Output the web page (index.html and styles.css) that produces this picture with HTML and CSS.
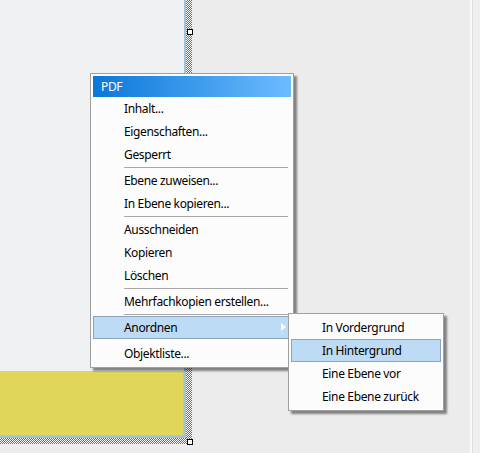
FILE: index.html
```html
<!DOCTYPE html>
<html lang="de">
<head>
  <meta charset="UTF-8">
  <title>Objekt-Kontextmenü</title>
  <link rel="stylesheet" href="styles.css">
</head>
<body>
  <div class="workspace">
    <div class="canvas">
      <div class="selection">
        <div class="page">
          <div class="note"></div>
        </div>
        <span class="handle handle-top"></span>
        <span class="handle handle-bottom"></span>
      </div>
    </div>
    <div class="edge"></div>
  </div>

  <ul class="menu main-menu">
    <li class="menu-title">PDF</li>
    <li class="item">Inhalt...</li>
    <li class="item">Eigenschaften...</li>
    <li class="item">Gesperrt</li>
    <li class="sep"></li>
    <li class="item">Ebene zuweisen...</li>
    <li class="item">In Ebene kopieren...</li>
    <li class="sep"></li>
    <li class="item">Ausschneiden</li>
    <li class="item">Kopieren</li>
    <li class="item">Löschen</li>
    <li class="sep"></li>
    <li class="item">Mehrfachkopien erstellen...</li>
    <li class="sep"></li>
    <li class="item active has-sub">Anordnen</li>
    <li class="sep blank"></li>
    <li class="item">Objektliste...</li>
  </ul>

  <ul class="menu sub-menu">
    <li class="item">In Vordergrund</li>
    <li class="item active">In Hintergrund</li>
    <li class="item">Eine Ebene vor</li>
    <li class="item">Eine Ebene zurück</li>
  </ul>
</body>
</html>
```

FILE: styles.css
```css
body {
  margin: 0;
  font-family: "Noto Sans", sans-serif;
  font-size: 12px;
  letter-spacing: -0.35px;
  color: #000;
  background: #ececec;
  position: relative;
  width: 480px;
  height: 453px;
  overflow: hidden;
}

/* drawing area */
.workspace {
  display: flex;
  height: 453px;
}

.canvas {
  flex: 1;
}

.edge {
  width: 8px;
  background: #efefef;
  border-left: 2px solid #f9f9f9;
  box-shadow: inset 1px 0 0 #dedede;
}

/* selected page with hatched frame */
.selection {
  position: relative;
  width: 186px;
  padding: 0 6px 6px 0;
  background-color: #fff;
  background-image: conic-gradient(#6e6e6e 25%, #fff 0 50%, #6e6e6e 0 75%, #fff 0);
  background-size: 2px 2px;
}

.page {
  height: 436px;
  display: flex;
  flex-direction: column;
  background: #eef0f2;
  border-right: 2px solid #9cc2e6;
  border-bottom: 2px solid #9cc2e6;
  box-sizing: content-box;
}

.note {
  margin-top: auto;
  height: 64px;
  background: #e0d75a;
  border-right: 1px solid #b8cf86;
  border-bottom: 1px solid #b8cf86;
}

.handle {
  position: absolute;
  left: 187px;
  width: 4px;
  height: 4px;
  background: #fff;
  border: 1px solid #000;
}

.handle-top { top: 29px; }
.handle-bottom { top: 439px; }

/* context menus */
.menu {
  position: absolute;
  margin: 0;
  padding: 2px;
  list-style: none;
  background: #fcfcfc;
  border: 1px solid #a0a0a0;
  box-shadow: 3px 3px 2px rgba(0, 0, 0, 0.45);
}

.main-menu {
  left: 90px;
  top: 73px;
  width: 198px;
}

.sub-menu {
  left: 288px;
  top: 313px;
  width: 150px;
}

.menu-title {
  height: 21px;
  line-height: 21px;
  padding-left: 8px;
  color: #fff;
  background: linear-gradient(to right, #0b77d8, #6cbcff);
}

.item {
  position: relative;
  height: 23px;
  line-height: 23px;
  padding-left: 31px;
  white-space: nowrap;
  box-sizing: border-box;
}

.item.active {
  background: #bddbf4;
  border: 1px solid #8ea4bd;
  line-height: 21px;
  padding-left: 30px;
}

.has-sub::after {
  content: "";
  position: absolute;
  right: 4px;
  top: 6px;
  border-left: 5px solid #fff;
  border-top: 4px solid transparent;
  border-bottom: 4px solid transparent;
}

.sep {
  height: 3px;
  margin-left: 31px;
  margin-right: 3px;
  background: linear-gradient(#fcfcfc 1px, #a8a8a8 1px 2px, #fcfcfc 2px);
}

.sep.blank {
  background: none;
}
```
